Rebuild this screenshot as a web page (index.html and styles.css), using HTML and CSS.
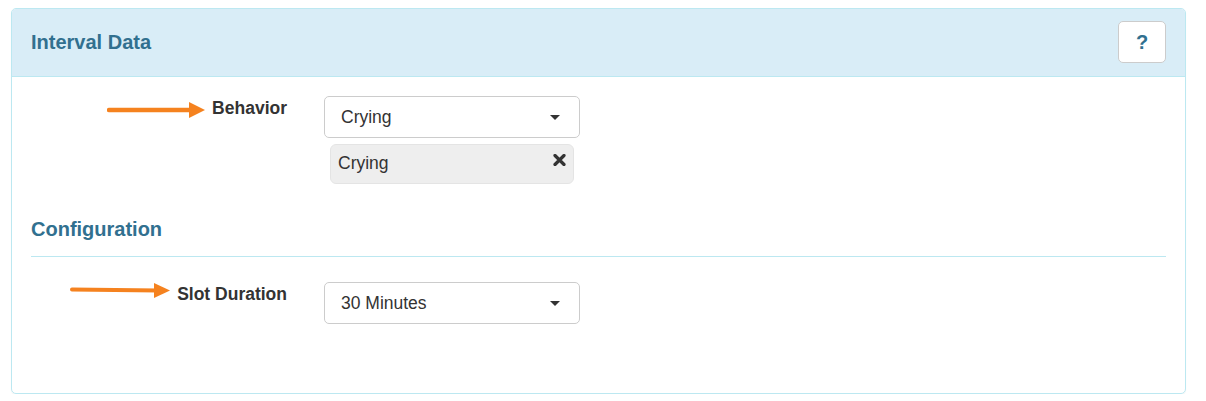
FILE: index.html
```html
<!DOCTYPE html>
<html lang="en">
<head>
    <meta charset="UTF-8">
    <title>Interval Data</title>
    <link rel="stylesheet" href="styles.css">
</head>
<body>
    <div class="page">
        <div class="panel">
            <div class="panel-heading">
                <h3 class="panel-title">Interval Data</h3>
                <button type="button" class="help-btn">?</button>
            </div>

            <div class="panel-body">
                <!-- Behavior -->
                <div class="form-row">
                    <div class="label-col">
                        <svg class="arrow arrow-behavior" width="98" height="16" viewBox="0 0 98 16">
                            <line x1="2" y1="8" x2="86" y2="8" stroke="#f5821f" stroke-width="4.5" stroke-linecap="round"/>
                            <polygon points="82,0 98,8 82,16" fill="#f5821f"/>
                        </svg>
                        <label>Behavior</label>
                    </div>
                    <div class="control-col">
                        <div class="select">
                            <span>Crying</span>
                            <span class="caret"></span>
                        </div>
                        <div class="chip">
                            <span>Crying</span>
                            <svg class="chip-close" width="13" height="12" viewBox="0 0 13 12">
                                <path d="M2 1.5 L11 10.5 M11 1.5 L2 10.5" stroke="#333" stroke-width="3.2" stroke-linecap="round"/>
                            </svg>
                        </div>
                    </div>
                </div>

                <h4 class="section-title">Configuration</h4>

                <!-- Slot Duration -->
                <div class="form-row">
                    <div class="label-col">
                        <svg class="arrow arrow-slot" width="100" height="16" viewBox="0 0 100 16">
                            <line x1="2" y1="6.5" x2="88" y2="7.6" stroke="#f5821f" stroke-width="4" stroke-linecap="round"/>
                            <polygon points="84,0 100,7.5 84,15" fill="#f5821f"/>
                        </svg>
                        <label>Slot Duration</label>
                    </div>
                    <div class="control-col">
                        <div class="select">
                            <span>30 Minutes</span>
                            <span class="caret"></span>
                        </div>
                    </div>
                </div>
            </div>
        </div>
    </div>
</body>
</html>
```

FILE: styles.css
```css
body {
    margin: 0;
    font-family: "Liberation Sans", Arial, sans-serif;
    color: #333;
    background: #fff;
}

.page {
    padding: 8px 20px 0 11px;
}

.panel {
    border: 1px solid #bce8f1;
    border-radius: 5px;
    box-shadow: 0 1px 1px rgba(0, 0, 0, 0.05);
    overflow: hidden;
}

.panel-heading {
    display: flex;
    justify-content: space-between;
    align-items: center;
    padding: 12px 19px 13px;
    background: #d9edf7;
    border-bottom: 1px solid #bce8f1;
}

.panel-title {
    margin: 0;
    font-size: 20px;
    font-weight: bold;
    color: #31708f;
}

.help-btn {
    width: 48px;
    height: 42px;
    padding: 0;
    background: #fff;
    border: 1px solid #ccc;
    border-radius: 5px;
    font-family: "Liberation Sans", Arial, sans-serif;
    font-size: 20px;
    font-weight: bold;
    color: #31708f;
}

.panel-body {
    padding: 19px 19px 69px;
}

.form-row {
    display: flex;
    gap: 37px;
}

.label-col {
    width: 256px;
    display: flex;
    justify-content: flex-end;
    align-items: flex-start;
    gap: 7px;
}

.label-col label {
    font-size: 17.5px;
    font-weight: bold;
    line-height: 25px;
}

.arrow-behavior {
    margin-top: 6px;
}

.arrow-slot {
    margin-top: 1px;
}

.control-col {
    width: 256px;
}

.select {
    display: flex;
    justify-content: space-between;
    align-items: center;
    box-sizing: border-box;
    height: 42px;
    padding: 0 19px 0 16px;
    border: 1px solid #ccc;
    border-radius: 5px;
    font-size: 17.5px;
    color: #333;
}

.caret {
    width: 0;
    height: 0;
    border-top: 5px solid #333;
    border-left: 5px solid transparent;
    border-right: 5px solid transparent;
}

.chip {
    display: flex;
    justify-content: space-between;
    align-items: center;
    box-sizing: border-box;
    height: 40px;
    margin: 6px 6px 0;
    padding: 0 7px 2px 7px;
    background: #eee;
    border: 1px solid #e4e4e4;
    border-radius: 6px;
    font-size: 17.5px;
}

.chip-close {
    margin-top: -6px;
}

.section-title {
    margin: 34px 0 25px;
    padding-bottom: 16px;
    border-bottom: 1px solid #bce8f1;
    font-size: 20px;
    line-height: 22px;
    font-weight: bold;
    color: #31708f;
}
```
